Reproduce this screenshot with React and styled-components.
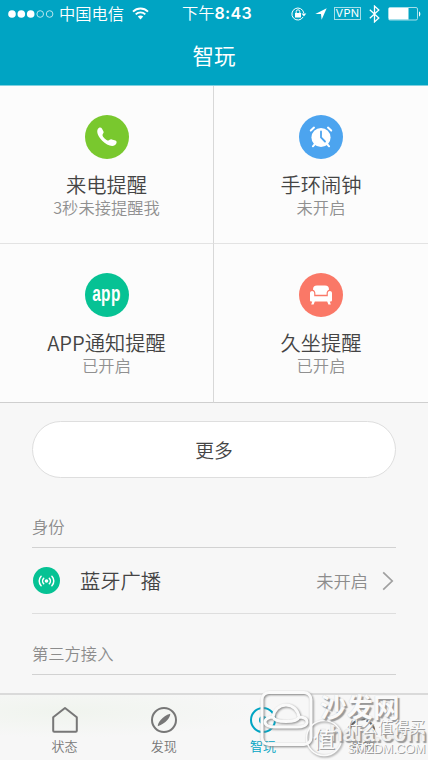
import React from "react";
import styled, { createGlobalStyle } from "styled-components";

const Global = createGlobalStyle`
  * { box-sizing: border-box; }
  body {
    margin: 0;
    background: #f7f7f7;
    font-family: "Noto Sans CJK SC", sans-serif;
    font-weight: 350;
    color: #444;
  }
  svg { display: block; }
`;

const Screen = styled.div`
  position: relative;
  width: 428px;
  height: 760px;
  overflow: hidden;
  display: flex;
  flex-direction: column;
  background: #f7f7f7;
`;

const Header = styled.header`
  height: 86px;
  flex: none;
  background: #00a4c3;
  color: #fff;
  border-bottom: 1px solid #7fd0df;
`;

const StatusBar = styled.div`
  height: 27px;
  display: grid;
  grid-template-columns: 174px 86px 1fr;
  align-items: center;
  font-size: 16px;
  line-height: 24px;
`;

const StatusGroup = styled.div`
  display: flex;
  align-items: center;
  height: 24px;
  padding-left: ${(p) => p.$left || 0}px;
`;

const Carrier = styled.span`
  margin: -1px 8px 0 4px;
  font-size: 16.3px;
`;

const Clock = styled.span`
  display: flex;
  white-space: nowrap;
  font-size: 16.3px;
  margin-top: -1px;
`;

const Digits = styled.b`
  font: 600 16px/26px Inter, sans-serif;
  letter-spacing: 0.3px;
`;

const Vpn = styled.span`
  width: 27px;
  height: 13px;
  margin: 0 8px 0 7px;
  border: 1px solid #a5dfe9;
  font: 400 11px/11px Inter, sans-serif;
  letter-spacing: 0.3px;
  text-align: center;
`;

const PageTitle = styled.h1`
  margin: 0;
  height: 56px;
  font-size: 21.5px;
  line-height: 56px;
  font-weight: 400;
  text-align: center;
`;

const Grid = styled.section`
  flex: none;
  display: grid;
  grid-template-columns: 214px 214px;
  grid-template-rows: 158px 159px;
  background: #fcfcfc;
`;

const Tile = styled.div`
  display: flex;
  flex-direction: column;
  align-items: center;
  padding-top: 29px;
  border-right: ${(p) => (p.$divided ? "1px solid #d8d8d8" : "0")};
  border-bottom: 1px solid ${(p) => (p.$last ? "#cfcfcf" : "#e3e3e3")};
`;

const TileTitle = styled.div`
  margin-top: 11px;
  font-size: 20.3px;
  line-height: 28px;
`;

const TileState = styled.div`
  margin-top: -2px;
  font-size: 16.3px;
  line-height: 22px;
  color: #909090;
`;

const Circle = styled.div`
  flex: none;
  width: ${(p) => p.$size}px;
  height: ${(p) => p.$size}px;
  border-radius: 50%;
  background: ${(p) => p.$color};
  display: flex;
  align-items: center;
  justify-content: center;
  color: #fff;
`;

const AppWord = styled.span`
  font: 700 22px/24px "Liberation Sans", sans-serif;
  letter-spacing: 0.6px;
  transform: scale(0.7, 1.04) translateY(-1px);
`;

const More = styled.button`
  flex: none;
  width: 364px;
  height: 57px;
  margin: 18px auto 0 32px;
  padding: 0;
  border: 1px solid #dedede;
  border-radius: 29px;
  background: #fff;
  color: #444;
  font: 350 18.8px/53px "Noto Sans CJK SC", sans-serif;
`;

const SectionTitle = styled.h2`
  flex: none;
  height: ${(p) => p.$height}px;
  margin: 0 32px;
  padding-bottom: 9px;
  display: flex;
  align-items: flex-end;
  font-size: 16.3px;
  line-height: 24px;
  font-weight: 350;
  color: #8c8c8c;
  border-bottom: 1px solid #d2d2d2;
`;

const Row = styled.div`
  flex: none;
  height: 66px;
  margin: 0 32px;
  padding: 0 2px 0 1px;
  display: flex;
  align-items: center;
  border-bottom: 1px solid #dedede;
`;

const RowLabel = styled.span`
  flex: 1;
  margin: -1px 0 0 20px;
  font-size: 20.3px;
  line-height: 30px;
`;

const RowValue = styled.span`
  margin-right: 14px;
  font-size: 17.3px;
  line-height: 28px;
  color: #8c8c8c;
`;

const TabBar = styled.nav`
  height: 67px;
  margin-top: auto;
  padding: 0 16px 0 15px;
  display: grid;
  grid-template-columns: repeat(4, 1fr);
  border-top: 2px solid #dadada;
  background: radial-gradient(ellipse at 15% 25%, #f0f4ee 0, #f7f7f7 38%);
`;

const Tab = styled.div`
  display: flex;
  flex-direction: column;
  align-items: center;
  padding-top: 11px;
  font-size: 13px;
  line-height: 20px;
  gap: 2px;
  color: ${(p) => (p.$active ? "#00a4c3" : "#777")};
`;

const Watermark = styled.div`
  position: absolute;
  left: 258px;
  top: 688px;
  width: 170px;
  height: 72px;
  pointer-events: none;
`;

const Mark = styled.span`
  position: absolute;
  left: ${(p) => p.$x}px;
  top: ${(p) => p.$y}px;
  white-space: nowrap;
  color: ${(p) => p.$color || "#fafafa"};
  font-family: ${(p) => (p.$latin ? '"Liberation Sans"' : '"Noto Sans CJK SC"')}, sans-serif;
  font-size: ${(p) => p.$size}px;
  line-height: ${(p) => p.$size}px;
  font-weight: ${(p) => p.$weight};
  letter-spacing: ${(p) => p.$spacing || 0}px;
  text-shadow: ${(p) => (p.$thin ? "1px 1px 0 #a0a0a0" : "2px 2px 1px #999, 0 0 1px #ccc")};
`;

const MarkArt = styled.svg`
  position: absolute;
  left: 0;
  top: 0;
  filter: drop-shadow(1px 1px 0.8px #888);
`;

const Signal = () => (
  <svg width="47" height="12" fill="#fff">
    <circle cx="4" cy="6" r="3.8" />
    <circle cx="13.3" cy="6" r="3.8" />
    <circle cx="22.7" cy="6" r="3.8" />
    <g fill="none" stroke="#b9e6ee"><circle cx="32.2" cy="6" r="3.3" /><circle cx="41.6" cy="6" r="3.3" /></g>
  </svg>
);

const Wifi = () => (
  <svg width="17" height="13" viewBox="0 0 17 13" fill="none" stroke="#fff" strokeWidth="1.9">
    <path d="M1 4.7C5.2.5 11.8.5 16 4.7M3.7 7.4c2.7-2.7 6.9-2.7 9.6 0" />
    <path d="M5.8 9.5c1.5-1.5 3.9-1.5 5.4 0L8.5 12.4Z" fill="#fff" stroke="none" />
  </svg>
);

const Lock = () => (
  <svg width="16" height="14" viewBox="0 0 16 14" fill="none" stroke="#fff">
    <path d="M12.1 10A6 6 0 1 1 12.8 6" />
    <path d="M10.5 6.5h4.8l-2.4 3Z" fill="#fff" stroke="none" />
    <rect x="4" y="6" width="6" height="4.5" fill="#fff" stroke="none" />
    <path d="M5.2 6V4.6a1.8 1.8 0 0 1 3.6 0V6" />
  </svg>
);

const Location = () => (
  <svg width="12" height="12" viewBox="0 0 12 12" fill="#fff"><path d="M11.7.3 6.6 11.7 6 6H.3Z" /></svg>
);

const Bluetooth = () => (
  <svg width="11" height="18" viewBox="0 0 11 18" fill="none" stroke="#fff" strokeWidth="1.3">
    <path d="m.8 4.8 9 8.1-4.3 4V1.1l4.3 4-9 8.1" />
  </svg>
);

const Battery = () => (
  <svg width="33" height="14" viewBox="0 0 33 14">
    <rect x=".5" y=".5" width="29" height="12.5" rx="1.5" fill="none" stroke="#a5dfe9" />
    <rect x="1" y="1" width="19.5" height="11.5" fill="#fff" />
    <path d="M31 4.5c1.8.6 1.8 4.4 0 5Z" fill="#fff" />
  </svg>
);

const Phone = () => (
  <svg width="22" height="22" viewBox="0 0 22 22" fill="#fff">
    <path d="M1.7 3.2C2.8 1.2 5 .9 5.9 2.6l1.6 3c.7 1.4-.9 2.2-1 3.3-.2 1.8 4 5.8 5.8 5.7 1.3-.1 1.8-1.7 3.4-1.2l3.8 1.1c2 .8 1.1 3.7-.8 4.8-3.2 1.9-8.8-.8-12.5-4.6C2.5 10.9.2 6.2 1.7 3.2Z" />
  </svg>
);

const Alarm = () => (
  <svg width="24" height="24" viewBox="0 0 24 24">
    <circle cx="12" cy="12.5" r="9.6" fill="#fff" />
    <g stroke="#fff" strokeWidth="2" strokeLinecap="round">
      <path d="m1.8 5.6 3.2-3M22.2 5.6l-3.2-3M6 19l-2.1 2.3M18 19l2.1 2.3" />
    </g>
    <path d="M12 6.5v6l4 4" fill="none" stroke="#4ca4ef" strokeWidth="1.8" strokeLinecap="round" />
  </svg>
);

const Armchair = () => (
  <svg width="24" height="22" viewBox="0 0 24 22" fill="#fff">
    <path d="M4 5.7C4 2.8 5.2 1.6 8 1.6h8c2.8 0 4 1.2 4 4.1-1.6.6-2.4 1.8-2.4 4v1.1H6.4V9.7c0-2.2-.8-3.4-2.4-4Z" />
    <path d="M1 9.2c0-3 4.2-3 4.2 0v3h13.6v-3c0-3 4.2-3 4.2 0V16c0 1-.6 1.6-1.6 1.6h-.6l1 2.8h-2.4l-1.2-2.8H5.8l-1.2 2.8H2.2l1-2.8h-.6C1.6 17.6 1 17 1 16Z" />
  </svg>
);

const Broadcast = () => (
  <svg width="17" height="14" viewBox="0 0 18 14" fill="none" stroke="#fff" strokeWidth="1.6" strokeLinecap="round">
    <circle cx="9" cy="7" r="1.9" fill="#fff" stroke="none" />
    <path d="M6 4.2a4 4 0 0 0 0 5.6M12 4.2a4 4 0 0 1 0 5.6M3.3 2a7.2 7.2 0 0 0 0 10M14.7 2a7.2 7.2 0 0 1 0 10" />
  </svg>
);

const Chevron = () => (
  <svg width="12" height="20" viewBox="0 0 12 20" fill="none" stroke="#a0a0a0" strokeWidth="1.7">
    <path d="m1.2 1.4 9 8.6-9 8.6" />
  </svg>
);

const House = () => (
  <svg width="28" height="28" viewBox="0 0 28 28" fill="none" stroke="#777" strokeWidth="2" strokeLinejoin="round">
    <path d="M2.2 11.3 14 2l11.8 9.3v13.5a1 1 0 0 1-1 1H3.2a1 1 0 0 1-1-1Z" />
  </svg>
);

const Compass = () => (
  <svg width="28" height="28" viewBox="0 0 28 28">
    <circle cx="14" cy="14" r="12" fill="none" stroke="#777" strokeWidth="2" />
    <path d="M20.2 7.8c.3 3.3-4.3 9.9-12.4 12.4C7.5 16.9 12.1 10.3 20.2 7.8Z" fill="#777" />
  </svg>
);

const Play = () => (
  <svg width="28" height="28" viewBox="0 0 28 28">
    <circle cx="14" cy="14" r="12" fill="none" stroke="#00a4c3" strokeWidth="2" />
    <circle cx="14" cy="14" r="4" fill="#00a4c3" />
  </svg>
);

const Person = () => (
  <svg width="28" height="28" viewBox="0 0 28 28" fill="none" stroke="#666" strokeWidth="2.2">
    <circle cx="14" cy="7.5" r="5.8" />
    <path d="M2 26v-3c1-5 4-7 7.5-8.5M26 26v-3c-1-5-4-7-7.5-8.5" />
  </svg>
);

const tiles = [
  { title: "来电提醒", state: "3秒未接提醒我", color: "#79c82e", icon: <Phone /> },
  { title: "手环闹钟", state: "未开启", color: "#4ca4ef", icon: <Alarm /> },
  { title: "APP通知提醒", state: "已开启", color: "#06c294", icon: <AppWord>app</AppWord> },
  { title: "久坐提醒", state: "已开启", color: "#fa7867", icon: <Armchair /> },
];

const tabs = [
  { label: "状态", icon: <House /> },
  { label: "发现", icon: <Compass /> },
  { label: "智玩", icon: <Play />, active: true },
  { label: "我的", icon: <Person /> },
];

export default function App() {
  return (
    <Screen>
      <Global />
      <Header>
        <StatusBar>
          <StatusGroup $left={8}><Signal /><Carrier>中国电信</Carrier><Wifi /></StatusGroup>
          <StatusGroup $left={8}><Clock>下午<Digits>8:43</Digits></Clock></StatusGroup>
          <StatusGroup $left={31}>
            <Lock />
            <StatusGroup $left={8}><Location /></StatusGroup>
            <Vpn>VPN</Vpn>
            <Bluetooth />
            <StatusGroup $left={8}><Battery /></StatusGroup>
          </StatusGroup>
        </StatusBar>
        <PageTitle>智玩</PageTitle>
      </Header>
      <Grid>
        {tiles.map((t, i) => (
          <Tile key={t.title} $divided={i % 2 === 0} $last={i > 1}>
            <Circle $size={44} $color={t.color}>{t.icon}</Circle>
            <TileTitle>{t.title}</TileTitle>
            <TileState>{t.state}</TileState>
          </Tile>
        ))}
      </Grid>
      <More>更多</More>
      <SectionTitle $height={70}>身份</SectionTitle>
      <Row>
        <Circle $size={27} $color="#06c294"><Broadcast /></Circle>
        <RowLabel>蓝牙广播</RowLabel>
        <RowValue>未开启</RowValue>
        <Chevron />
      </Row>
      <SectionTitle $height={61}>第三方接入</SectionTitle>
      <TabBar>
        {tabs.map((t) => (
          <Tab key={t.label} $active={t.active}>{t.icon}<span>{t.label}</span></Tab>
        ))}
      </TabBar>
      <Watermark>
        <MarkArt width="170" height="72" fill="none" stroke="#fafafa">
          <rect x="4" y="4.5" width="49" height="52" rx="7" strokeWidth="3" />
          <path d="M17 39c-6 0-10-2-10-5s4-5 8-5c1-7 6-12 13-12s12 5 13 12c5 0 8 2 8 5s-4 5-10 5ZM15 29c2 6 24 6 26 0" strokeWidth="3" />
          <circle cx="66" cy="50" r="17.5" strokeWidth="1.5" />
        </MarkArt>
        <Mark $x={59} $y={35} $size={22} $weight={700} $latin $color="#f2f2f2">shafa.com</Mark>
        <Mark $x={55} $y={38} $size={22} $weight={400} $thin>值</Mark>
        <Mark $x={62} $y={5} $size={26.5} $weight={700}>沙发网</Mark>
        <Mark $x={88} $y={31} $size={15.8} $weight={350} $thin>什么值得买</Mark>
        <Mark $x={89} $y={54} $size={13} $weight={400} $spacing={-0.4} $thin $latin>SMZDM.COM</Mark>
      </Watermark>
    </Screen>
  );
}
